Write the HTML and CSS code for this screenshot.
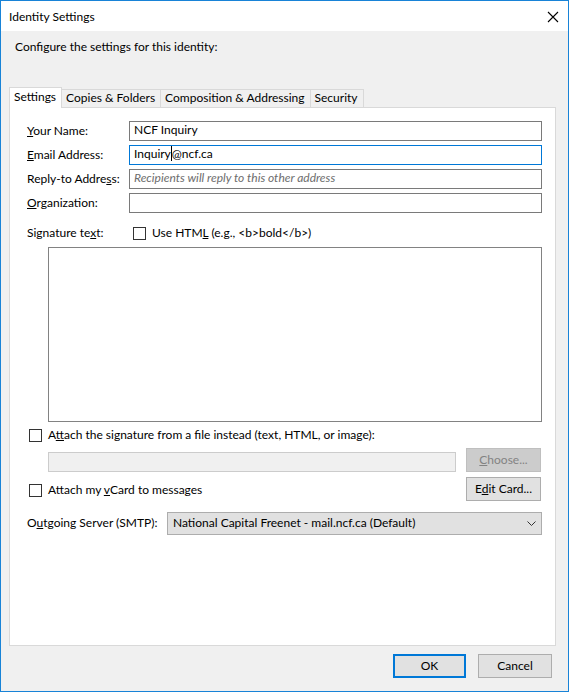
FILE: index.html
```html
<!DOCTYPE html>
<html lang="en">
<head>
    <meta charset="UTF-8">
    <title>Identity Settings</title>
    <link rel="stylesheet" href="styles.css">
</head>
<body>
    <div class="dialog">
        <div class="titlebar">
            <span class="title">Identity Settings</span>
            <span class="close">
                <svg width="12" height="12" viewBox="0 0 12 12"><path d="M1 1 L11 11 M11 1 L1 11" stroke="#000" stroke-width="1.1" fill="none"/></svg>
            </span>
        </div>

        <div class="content">
            <div class="intro">Configure the settings for this identity:</div>

            <div class="tabs">
                <div class="tab selected">Settings</div>
                <div class="tab">Copies &amp; Folders</div>
                <div class="tab">Composition &amp; Addressing</div>
                <div class="tab">Security</div>
            </div>

            <div class="panel">
                <div class="fields">
                    <label><u>Y</u>our Name:</label>
                    <div class="textbox">NCF Inquiry</div>
                    <label><u>E</u>mail Address:</label>
                    <div class="textbox focused">Inquiry<span class="caret"></span>@ncf.ca</div>
                    <label>Reply-to Addre<u>s</u>s:</label>
                    <div class="textbox placeholder">Recipients will reply to this other address</div>
                    <label><u>O</u>rganization:</label>
                    <div class="textbox"></div>
                </div>

                <div class="sig-row">
                    <span class="sig-label">Signature te<u>x</u>t:</span>
                    <span class="checkbox"></span>
                    <span class="text">Use HTM<u>L</u> (e.g., &lt;b&gt;bold&lt;/b&gt;)</span>
                </div>
                <div class="sig-box"></div>

                <div class="check-row attach-row">
                    <span class="checkbox"></span>
                    <span class="text">A<u>t</u>tach the signature from a file instead (text, HTML, or image):</span>
                </div>
                <div class="file-row">
                    <div class="file-field"></div>
                    <button class="btn disabled"><u>C</u>hoose...</button>
                </div>
                <div class="vcard-row">
                    <div class="check-row">
                        <span class="checkbox"></span>
                        <span class="text">Attach my <u>v</u>Card to messages</span>
                    </div>
                    <button class="btn">E<u>d</u>it Card...</button>
                </div>

                <div class="smtp-row">
                    <span class="smtp-label">O<u>u</u>tgoing Server (SMTP):</span>
                    <div class="select">
                        <span class="text">National Capital Freenet - mail.ncf.ca (Default)</span>
                        <svg width="9" height="5" viewBox="0 0 9 5"><path d="M0.5 0.5 L4.5 4.5 L8.5 0.5" stroke="#333" fill="none"/></svg>
                    </div>
                </div>
            </div>

            <div class="buttons">
                <button class="btn default">OK</button>
                <button class="btn">Cancel</button>
            </div>
        </div>
    </div>
</body>
</html>
```

FILE: styles.css
```css
body {
    margin: 0;
    font-family: 'Lato', 'Liberation Sans', Arial, sans-serif;
    font-size: 12px;
    color: #000;
}
.dialog {
    width: 569px;
    height: 692px;
    box-sizing: border-box;
    border: 1px solid #1883d7;
    background-color: #f0f0f0;
    display: flex;
    flex-direction: column;
}
.titlebar {
    height: 30px;
    background-color: white;
    display: flex;
    align-items: center;
    padding-left: 8px;
    flex-shrink: 0;
}
.title {
    flex: 1;
}
.close {
    width: 12px;
    height: 12px;
    margin-right: 9px;
    margin-top: 1px;
}
.close svg {
    display: block;
}
.content {
    flex: 1;
    display: flex;
    flex-direction: column;
    padding: 0 12px 0 8px;
}
.intro {
    margin-top: 8px;
    padding-left: 6px;
    line-height: 15px;
}
.tabs {
    display: flex;
    align-items: flex-end;
    margin-top: 33px;
    height: 20px;
    position: relative;
    z-index: 1;
}
.tab {
    height: 18px;
    box-sizing: border-box;
    line-height: 15px;
    padding: 0 5px 0 4px;
    border: 1px solid #d9d9d9;
    border-left: none;
    border-bottom: none;
}
.tab.selected {
    height: 21px;
    margin-bottom: -1px;
    background-color: white;
    border-left: 1px solid #d9d9d9;
    padding: 1px 5px 0 4px;
}
.panel {
    flex: 1;
    background-color: white;
    border: 1px solid #d9d9d9;
    padding: 13px 13px 0 17px;
}
.fields {
    display: grid;
    grid-template-columns: 102px 1fr;
    row-gap: 4px;
    align-items: center;
}
.fields label,
.sig-label,
.smtp-label,
.text {
    padding-bottom: 2px;
}
.textbox {
    height: 20px;
    box-sizing: border-box;
    border: 1px solid #7a7a7a;
    padding: 0 4px;
    line-height: 16px;
    white-space: nowrap;
}
.textbox.focused {
    border-color: #0078d7;
}
.textbox.placeholder {
    color: #6d6d6d;
    font-style: italic;
}
.caret {
    display: inline-block;
    width: 1px;
    height: 15px;
    background-color: #000;
    vertical-align: -3px;
}
.checkbox {
    display: inline-block;
    width: 13px;
    height: 13px;
    box-sizing: border-box;
    border: 1px solid #333;
    background-color: white;
    flex-shrink: 0;
}
.sig-row {
    display: flex;
    align-items: center;
    height: 14px;
    margin-top: 13px;
}
.sig-label {
    width: 106px;
}
.sig-row .checkbox {
    margin-right: 6px;
}
.sig-box {
    height: 175px;
    box-sizing: border-box;
    margin: 7px 0 0 21px;
    border: 1px solid #828282;
}
.check-row {
    display: flex;
    align-items: center;
    height: 14px;
}
.check-row .checkbox {
    margin: 0 6px 0 2px;
}
.attach-row {
    margin-top: 6px;
}
.file-row {
    display: flex;
    align-items: center;
    gap: 10px;
    height: 24px;
    margin: 6px 1px 0 21px;
}
.file-field {
    flex: 1;
    height: 20px;
    box-sizing: border-box;
    background-color: #f0f0f0;
    border: 1px solid #cccccc;
    margin-top: 3px;
}
.btn {
    width: 75px;
    height: 24px;
    box-sizing: border-box;
    font-family: inherit;
    font-size: 12px;
    color: #000;
    background-color: #e1e1e1;
    border: 1px solid #adadad;
    padding: 0 0 2px 0;
}
.btn.disabled {
    background-color: #cccccc;
    border-color: #bfbfbf;
    color: #838383;
}
.vcard-row {
    display: flex;
    justify-content: space-between;
    align-items: center;
    height: 24px;
    margin: 5px 1px 0 0;
}
.vcard-row .check-row {
    margin-top: 2px;
}
.smtp-row {
    display: flex;
    align-items: center;
    margin-top: 11px;
}
.smtp-label {
    width: 140px;
}
.select {
    flex: 1;
    height: 23px;
    box-sizing: border-box;
    background-color: #e1e1e1;
    border: 1px solid #adadad;
    display: flex;
    align-items: center;
    justify-content: space-between;
    padding: 0 5px 0 5px;
}
.select svg {
    display: block;
}
.buttons {
    display: flex;
    justify-content: flex-end;
    gap: 12px;
    margin: 8px 4px 13px 0;
}
.buttons .btn {
    width: 73px;
}
.buttons .btn:last-child {
    width: 74px;
}
.btn.default {
    border: 2px solid #0078d7;
}
```
